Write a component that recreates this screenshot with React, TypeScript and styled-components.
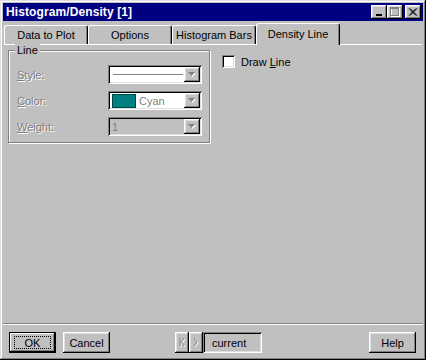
import React from "react";
import styled, { createGlobalStyle, css } from "styled-components";

const Global = createGlobalStyle`
  html, body { margin: 0; padding: 0; background: #c0c0c0; }
  body { font-family: "Liberation Sans", Arial, sans-serif; font-size: 11px; color: #000; }
  * { box-sizing: border-box; }
`;

const raised = css`
  box-shadow: inset -1px -1px #000, inset 1px 1px #fff, inset -2px -2px #808080, inset 2px 2px #dfdfdf;
`;
const sunken = css`
  box-shadow: inset 1px 1px #808080, inset -1px -1px #fff, inset 2px 2px #000, inset -2px -2px #dfdfdf;
`;

const Window = styled.div`
  width: 426px;
  height: 360px;
  background: #c0c0c0;
  padding: 3px;
  display: flex;
  flex-direction: column;
  box-shadow: inset -1px -1px #000, inset 1px 1px #dfdfdf, inset -2px -2px #808080, inset 2px 2px #fff;
`;

const TitleBar = styled.div`
  height: 18px;
  background: #000080;
  display: flex;
  align-items: center;
  padding: 0 2px 0 3px;
`;

const Title = styled.div`
  flex: 1;
  color: #fff;
  font-weight: bold;
  font-size: 12px;
  letter-spacing: 0.1px;
`;

const TitleButton = styled.div<{ $gap?: boolean }>`
  width: 16px;
  height: 14px;
  background: #c0c0c0;
  ${raised};
  margin-left: ${(p) => (p.$gap ? 2 : 0)}px;
  display: flex;
  align-items: center;
  justify-content: center;
`;

const TabStrip = styled.div`
  margin-top: 2px;
  height: 22px;
  display: flex;
  align-items: flex-end;
  padding-left: 0;
  border-bottom: 1px solid #fff;
  margin-left: 1px;
  margin-right: 1px;
`;

const Tab = styled.div<{ $active?: boolean }>`
  width: 84px;
  height: ${(p) => (p.$active ? 22 : 19)}px;
  margin-bottom: ${(p) => (p.$active ? -1 : 0)}px;
  background: #c0c0c0;
  border-top: 1px solid #fff;
  border-left: 1px solid #fff;
  border-right: 1px solid #000;
  border-radius: 3px 3px 0 0;
  box-shadow: inset -1px 0 #808080;
  display: flex;
  align-items: center;
  justify-content: center;
  padding-bottom: ${(p) => (p.$active ? 2 : 0)}px;
  position: relative;
  z-index: ${(p) => (p.$active ? 1 : 0)};
`;

const Body = styled.div`
  flex: 1;
  display: flex;
  align-items: flex-start;
  padding: 5px 0 0 5px;
`;

const Group = styled.div`
  position: relative;
  width: 202px;
  height: 93px;
  border: 1px solid #808080;
  box-shadow: inset 1px 1px #fff, 1px 1px #fff;
  padding: 14px 5px 0 8px;
  display: grid;
  grid-template-columns: 91px 94px;
  grid-auto-rows: 19px;
  row-gap: 7px;
  align-items: center;
`;

const Legend = styled.div`
  position: absolute;
  top: -7px;
  left: 6px;
  padding: 0 2px;
  background: #c0c0c0;
  line-height: 13px;
`;

const DisabledLabel = styled.div`
  color: #808080;
  text-shadow: 1px 1px #fff;
`;

const Under = styled.span`
  text-decoration: underline;
`;

const Combo = styled.div<{ $disabled?: boolean }>`
  height: 19px;
  background: ${(p) => (p.$disabled ? "#c0c0c0" : "#fff")};
  ${sunken};
  padding: 2px;
  display: flex;
  align-items: center;
`;

const ComboValue = styled.div`
  flex: 1;
  display: flex;
  align-items: center;
  padding-left: 2px;
  color: #808080;
  height: 15px;
`;

const LineSample = styled.div`
  width: 70px;
  height: 1px;
  background: #808080;
  margin-left: 1px;
`;

const Swatch = styled.div`
  width: 24px;
  height: 14px;
  background: #008080;
  border: 1px solid #004848;
  margin-right: 3px;
`;

const DropButton = styled.div`
  width: 16px;
  height: 15px;
  background: #c0c0c0;
  ${raised};
  display: flex;
  align-items: center;
  justify-content: center;
`;

const CheckRow = styled.label`
  margin-left: 12px;
  margin-top: 5px;
  display: flex;
  align-items: center;
  gap: 6px;
`;

const CheckBox = styled.div`
  width: 13px;
  height: 13px;
  background: #fff;
  ${sunken};
`;

const Separator = styled.div`
  height: 2px;
  border-top: 1px solid #808080;
  border-bottom: 1px solid #fff;
  margin: 0 0 0 0;
`;

const Footer = styled.div`
  height: 32px;
  display: flex;
  align-items: flex-start;
  padding: 7px 7px 0 6px;
`;

const Button = styled.div<{ $default?: boolean }>`
  width: 47px;
  height: 21px;
  background: #c0c0c0;
  display: flex;
  align-items: center;
  justify-content: center;
  position: relative;
  ${(p) =>
    p.$default
      ? css`
          box-shadow: inset 0 0 0 1px #000, inset -2px -2px #000, inset 2px 2px #fff, inset -3px -3px #808080;
        `
      : raised};
`;

const Focus = styled.span`
  border: 1px dotted #000;
  width: 37px;
  height: 13px;
  display: flex;
  align-items: center;
  justify-content: center;
`;

const NavGroup = styled.div`
  display: flex;
  margin-left: 65px;
`;

const NavButton = styled.div`
  width: 14px;
  height: 21px;
  background: #c0c0c0;
  ${raised};
  display: flex;
  align-items: center;
  justify-content: center;
`;

const Current = styled.div`
  width: 59px;
  height: 21px;
  ${sunken};
  display: flex;
  align-items: center;
  padding-left: 9px;
`;

const Spacer = styled.div`
  flex: 1;
`;

const Arrow = ({ disabled }: { disabled?: boolean }) => (
  <svg width="8" height="5" viewBox="0 0 8 5">
    {disabled && <path d="M1 1h7L4.5 5z" fill="#fff" />}
    <path d="M0 0h7L3.5 4z" fill={disabled ? "#808080" : "#000"} />
  </svg>
);

const Combobox = ({ children, disabled }: { children: React.ReactNode; disabled?: boolean }) => (
  <Combo $disabled={disabled}>
    <ComboValue>{children}</ComboValue>
    <DropButton>
      <Arrow disabled />
    </DropButton>
  </Combo>
);

export default function App() {
  return (
    <>
      <Global />
      <Window>
        <TitleBar>
          <Title>Histogram/Density [1]</Title>
          <TitleButton>
            <svg width="10" height="10" viewBox="0 0 10 10">
              <rect x="2" y="7" width="6" height="2" fill="#000" />
            </svg>
          </TitleButton>
          <TitleButton>
            <svg width="10" height="10" viewBox="0 0 10 10">
              <rect x="1.5" y="1.5" width="8" height="8" fill="none" stroke="#fff" />
              <rect x="0.5" y="0.5" width="8" height="8" fill="none" stroke="#808080" />
              <rect x="1" y="1" width="7" height="1" fill="#808080" />
            </svg>
          </TitleButton>
          <TitleButton $gap>
            <svg width="10" height="9" viewBox="0 0 10 9">
              <path d="M1 0.5l7 7M2 0.5l7 7M8 0.5l-7 7M9 0.5l-7 7" stroke="#000" strokeWidth="1" />
            </svg>
          </TitleButton>
        </TitleBar>
        <TabStrip>
          <Tab>Data to Plot</Tab>
          <Tab>Options</Tab>
          <Tab>Histogram Bars</Tab>
          <Tab $active>Density Line</Tab>
        </TabStrip>
        <Body>
          <Group>
            <Legend>Line</Legend>
            <DisabledLabel>
              <Under>S</Under>tyle:
            </DisabledLabel>
            <Combobox>
              <LineSample />
            </Combobox>
            <DisabledLabel>
              <Under>C</Under>olor:
            </DisabledLabel>
            <Combobox>
              <Swatch />
              Cyan
            </Combobox>
            <DisabledLabel>
              <Under>W</Under>eight:
            </DisabledLabel>
            <Combobox disabled>1</Combobox>
          </Group>
          <CheckRow>
            <CheckBox />
            <span>
              Draw <Under>L</Under>ine
            </span>
          </CheckRow>
        </Body>
        <Separator />
        <Footer>
          <Button $default>
            <Focus>OK</Focus>
          </Button>
          <Button style={{ marginLeft: 7 }}>Cancel</Button>
          <NavGroup>
            <NavButton>
              <svg width="7" height="9" viewBox="0 0 7 9">
                <path d="M2 1v8M6 1L3 5l3 4" stroke="#fff" fill="none" />
                <path d="M1 0v8M5 0L2 4l3 4" stroke="#808080" fill="none" />
              </svg>
            </NavButton>
            <NavButton>
              <svg width="6" height="9" viewBox="0 0 6 9">
                <path d="M2 1l3 4-3 4" stroke="#fff" fill="none" />
                <path d="M1 0l3 4-3 4" stroke="#808080" fill="none" />
              </svg>
            </NavButton>
            <Current>current</Current>
          </NavGroup>
          <Spacer />
          <Button>Help</Button>
        </Footer>
      </Window>
    </>
  );
}
